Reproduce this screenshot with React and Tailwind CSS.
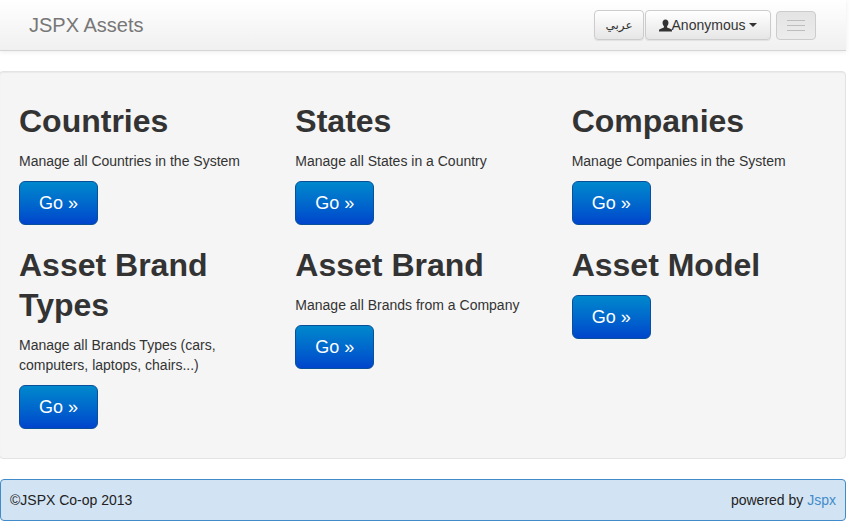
const cards = [
  { title: 'Countries', text: 'Manage all Countries in the System' },
  { title: 'States', text: 'Manage all States in a Country' },
  { title: 'Companies', text: 'Manage Companies in the System' },
  { title: 'Asset Brand Types', text: 'Manage all Brands Types (cars, computers, laptops, chairs...)' },
  { title: 'Asset Brand', text: 'Manage all Brands from a Company' },
  { title: 'Asset Model' },
];

const navBtn = 'h-[30px] rounded-[4px] border border-[#cccccc] bg-gradient-to-b from-white to-[#e6e6e6] text-[#333333] shadow-[0_1px_0_rgba(255,255,255,0.2),0_1px_1px_rgba(0,0,0,0.1)]';

const Card = ({ title, text }) => (
  <div className="pr-[30px] mb-5">
    <h2 className="text-[32px] leading-10 font-bold text-[#333333] mb-2.5">{title}</h2>
    {text && <p className="text-sm leading-5 text-[#333333] mb-2.5">{text}</p>}
    <button className="block w-[79px] h-11 rounded-md border border-[#0a4f9a] bg-gradient-to-b from-[#0088cc] to-[#0044cc] text-white text-lg leading-6">
      Go »
    </button>
  </div>
);

export default function App() {
  return (
    <div className="w-[846px] font-['Liberation_Sans',Arial,sans-serif] bg-white">
      <nav className="h-[51px] mb-5 border-b border-[#d5d5d5] bg-gradient-to-b from-white to-[#f0f0f0] shadow-[0_1px_5px_rgba(0,0,0,0.08)] flex items-center justify-between pl-[29px] pr-[30px]">
        <span className="leading-5 text-[#777777] text-[20px]">JSPX Assets</span>
        <div className="flex items-center">
          <button className={`${navBtn} w-[50px] text-xs font-['DejaVu_Sans',sans-serif] mr-px`}>عربي</button>
          <button className={`${navBtn} w-[126px] text-sm flex items-center justify-center`}>
            <svg viewBox="0 0 14 14" className="w-[13px] h-[13px] fill-[#333333]">
              <path d="M7 .5c2 0 3.2 1.500 3.200 3.600 0 1.600-.7 3-1.500 3.800v1.300l4 1.600c.7.3 1.300.8 1.300 1.700v1H0v-1c0-.9.6-1.400 1.300-1.700l4-1.600V7.900C4.500 7.100 3.800 5.700 3.800 4.100 3.800 2 5 .5 7 .5z" />
            </svg>
            <span>Anonymous</span>
            <span className="ml-1 w-0 h-0 border-x-4 border-x-transparent border-t-4 border-t-[#333333]" />
          </button>
          <button className="ml-[5px] w-10 h-[29px] rounded-[4px] border border-[#cccccc] bg-gradient-to-b from-[#e4e4e4] to-[#ececec] flex flex-col items-center justify-center gap-1">
            <span className="block w-[18px] h-px bg-[#bdbdbd]" />
            <span className="block w-[18px] h-px bg-[#bdbdbd]" />
            <span className="block w-[18px] h-px bg-[#bdbdbd]" />
          </button>
        </div>
      </nav>

      <main className="h-[388px] mb-5 -ml-px rounded-[4px] border border-[#e3e3e3] bg-[#f5f5f5] pl-[19px] pt-[29px] shadow-[inset_0_1px_1px_rgba(0,0,0,0.05)]">
        <div className="grid grid-cols-3 w-[829px]">
          {cards.map((card) => (
            <Card key={card.title} {...card} />
          ))}
        </div>
      </main>

      <footer className="h-[42px] mb-0.5 rounded-[4px] border border-[#428bca] bg-[#d2e4f4] flex items-center justify-between px-[9px] text-sm text-[#222222]">
        <span>©JSPX Co-op 2013</span>
        <span>
          powered by <a href="#" className="text-[#428bca]">Jspx</a>
        </span>
      </footer>
    </div>
  );
}
